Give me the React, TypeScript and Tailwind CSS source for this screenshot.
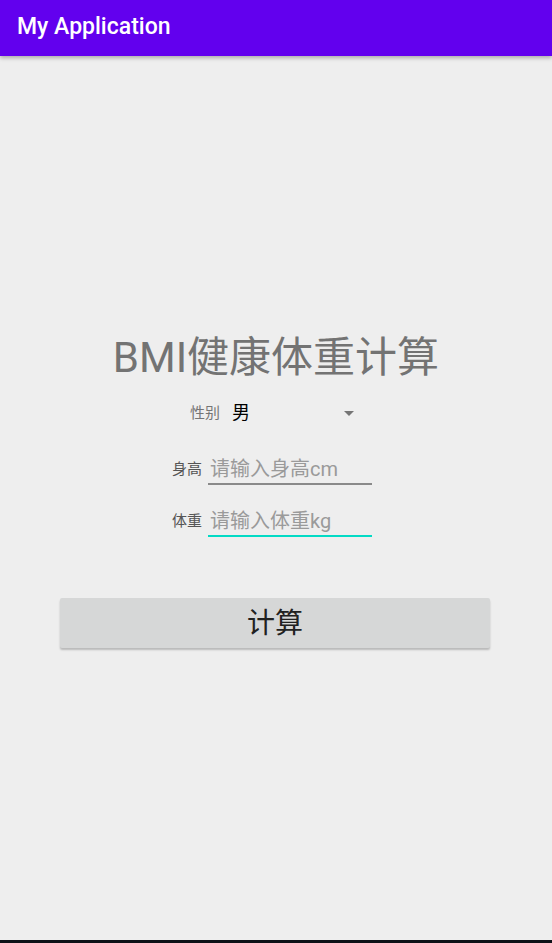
import React from "react";

export default function App() {
  return (
    <div className="h-[943px] w-full flex flex-col bg-[#eeeeee] font-['Roboto','Noto_Sans_CJK_SC',sans-serif] overflow-hidden">
      <header className="h-[56px] shrink-0 bg-[#6200ee] flex items-center pl-[17px] pb-[4px] shadow-[0_2px_4px_rgba(0,0,0,0.28)] relative z-10">
        <span className="text-white text-[23px] font-medium leading-none">My Application</span>
      </header>
      <main className="flex-1 flex flex-col items-center pt-[278px]">
        <h1 className="text-[42px] leading-[48px] text-[#737373] font-normal">BMI健康体重计算</h1>
        <div className="w-[200px] -ml-2 mt-[15px] flex flex-col">
          <div className="flex items-center h-[32px] pl-[18px]">
            <span className="text-[15px] text-[#757575] leading-none">性别</span>
            <div className="flex-1 flex items-center justify-between ml-[12px] pr-[18px]">
              <span className="text-[18px] text-black leading-none">男</span>
              <svg width="10" height="5" viewBox="0 0 10 5">
                <path d="M0 0 L10 0 L5 5 Z" fill="#757575" />
              </svg>
            </div>
          </div>
          <div className="flex items-center mt-[26px]">
            <span className="text-[15px] text-[#555555] leading-none w-[36px] mb-[2px]">身高</span>
            <div className="flex-1 border-b-2 border-[#8a8a8a] pl-[2px] text-[20px] leading-[28px] text-[#9a9a9a]">请输入身高cm</div>
          </div>
          <div className="flex items-center mt-[22px]">
            <span className="text-[15px] text-[#555555] leading-none w-[36px] mb-[2px]">体重</span>
            <div className="flex-1 border-b-2 border-[#03dac5] pl-[2px] text-[20px] leading-[28px] text-[#9a9a9a]">请输入体重kg</div>
          </div>
        </div>
        <button className="mt-[61px] -ml-[2px] w-[430px] h-[50px] bg-[#d6d7d7] rounded-[2px] shadow-[0_2px_2px_rgba(0,0,0,0.22)] flex items-center justify-center text-[28px] text-[#212121] leading-none pt-[2px]">
          计算
        </button>
      </main>
      <div className="h-[3px] shrink-0 bg-[#0d1117]" />
    </div>
  );
}
